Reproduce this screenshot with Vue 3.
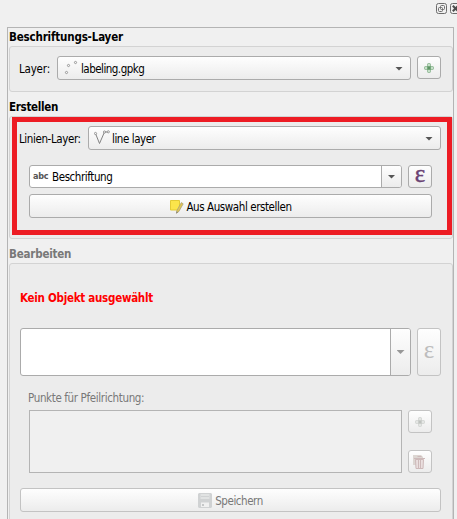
<script setup>
</script>

<template>
  <main class="dock">
    <header class="titlebar">
      <svg class="win" width="11" height="11" viewBox="0 0 11 11"><rect x=".5" y=".5" width="10" height="10" rx="2" /><rect x="4.5" y="2.5" width="4" height="4" rx="1" /><rect x="2.5" y="4.5" width="4" height="4" rx="1" /></svg>
      <svg class="win" width="11" height="11" viewBox="0 0 11 11"><rect x=".5" y=".5" width="10" height="10" rx="2" /><path class="cross" d="M2.8 2.8l5.4 5.4M8.2 2.8L2.8 8.2" /></svg>
    </header>

    <section class="panel">
      <h2 class="head first"><span class="t-layer">Beschriftungs-Layer</span></h2>
      <div class="group g1">
        <div class="row">
          <label class="lab l1">Layer:</label>
          <div class="control combo">
            <svg class="pts" width="16" height="16" viewBox="0 0 16 16"><circle cx="3.5" cy="12.5" r="1.1" /><circle cx="5.5" cy="5.5" r="1.1" /><circle cx="12.5" cy="2.5" r="1.1" /></svg>
            <span class="t-gpkg">labeling.gpkg</span>
            <i class="arrow"></i>
          </div>
          <button class="control tool">
            <svg class="plus" width="12" height="12" viewBox="0 0 12 12"><rect x="4.5" y="1.5" width="3" height="3" rx="1" /><rect x="4.5" y="7.5" width="3" height="3" rx="1" /><rect x="1.5" y="4.5" width="3" height="3" rx="1" /><rect x="7.5" y="4.5" width="3" height="3" rx="1" /><rect class="core" x="4.5" y="4.5" width="3" height="3" /></svg>
          </button>
        </div>
      </div>

      <h2 class="head"><span class="t-create">Erstellen</span></h2>
      <div class="group g2">
        <div class="mark"></div>
        <div class="row">
          <label class="lab l2"><span class="t-line">Linien-Layer:</span></label>
          <div class="control combo">
            <svg class="vline" width="16" height="16" viewBox="0 0 16 16"><path d="M1.5 3.500L5.500 13.500L10.500 2L14.500 2" /><circle cx="1.500" cy="3.500" r="1.100" /><circle cx="10.500" cy="2" r="1.100" /><circle cx="14.300" cy="1.800" r="1.100" /></svg>
            <span class="t-ll">line layer</span>
            <i class="arrow"></i>
          </div>
        </div>
        <div class="row field-row">
          <div class="control edit">
            <b class="abc">abc</b>
            <span class="t-besch">Beschriftung</span>
            <span class="drop"><i class="arrow"></i></span>
          </div>
          <button class="control tool eps">ε</button>
        </div>
        <button class="control wide make">
          <svg width="16" height="16" viewBox="0 0 16 16"><path d="M1.500 1.500h9v8l-1.500 1.500h-7.500z" fill="#fbe54b" stroke="#e3cb35" /><path d="M12.300 3.600l1.900 1.200-4.300 7.600-2.400 1.900.5-3z" fill="#e3c750" stroke="#a9a17f" stroke-width=".8" /><path d="M7.600 12.300l1.200.9-1.500 1.300z" fill="#777" /></svg>
          <span class="t-make">Aus Auswahl erstellen</span>
        </button>
      </div>

      <h2 class="head off"><span class="t-edit">Bearbeiten</span></h2>
      <div class="group g3">
        <p class="warn"><span class="t-warn">Kein Objekt ausgewählt</span></p>
        <div class="row">
          <div class="control edit tall"><span class="drop"><i class="arrow dim"></i></span></div>
          <button class="control tool eps tall dis">ε</button>
        </div>
        <p class="caption"><span class="t-cap">Punkte für Pfeilrichtung:</span></p>
        <div class="row list-row">
          <div class="list"></div>
          <div class="stack">
            <button class="control tool dis">
              <svg class="plus" width="12" height="12" viewBox="0 0 12 12"><rect x="4.5" y="1.5" width="3" height="3" rx="1" /><rect x="4.5" y="7.5" width="3" height="3" rx="1" /><rect x="1.5" y="4.5" width="3" height="3" rx="1" /><rect x="7.5" y="4.5" width="3" height="3" rx="1" /><rect class="core" x="4.5" y="4.5" width="3" height="3" /></svg>
            </button>
            <button class="control tool dis">
              <svg class="trash" width="14" height="16" viewBox="0 0 14 16"><path d="M1 1h8l2 2v8H1z" fill="#dcd6d2" /><path d="M3.500 5.500h8l-.5 9H4z" fill="#eadfdf" stroke="#cdb9b9" /><path d="M2 4.500h11M5.500 2.500h4M6.500 6v8M8.500 6v8" fill="none" stroke="#cdb9b9" /></svg>
            </button>
          </div>
        </div>
        <button class="control wide dis save">
          <svg width="14" height="15" viewBox="0 0 14 15"><path d="M1 0h12l1 1v13l-1 1H1l-1-1V1z" fill="#d0d2d3" /><path d="M2.500 1h9v5h-9z" fill="#e1e3e3" /><path d="M3 3.500h8" stroke="#d0d2d3" /><path d="M3 9.500h8V14H3z" fill="#f0f0f0" /><path d="M4 11h2v2H4z" fill="#c5c7c8" /></svg>
          <span class="t-save">Speichern</span>
        </button>
      </div>
    </section>
  </main>
</template>

<style>
body { overflow: hidden; background: #f0f0f0; }
</style>

<style scoped>
* { box-sizing: border-box; }
.dock { width: 457px; height: 519px; overflow: hidden; background: #f0f0f0; color: #000; font: 11.5px/14px "DejaVu Sans Condensed", "DejaVu Sans", sans-serif; font-stretch: condensed; }
span { white-space: nowrap; }
.t-layer { letter-spacing: -.18px; }
.t-gpkg { letter-spacing: -.52px; }
.t-create { letter-spacing: -.3px; }
.t-line { letter-spacing: -.4px; }
.t-ll { letter-spacing: -.45px; }
.t-besch { letter-spacing: -.42px; }
.t-make { letter-spacing: -.42px; }
.t-edit { letter-spacing: -.2px; }
.t-warn { letter-spacing: -.27px; }
.t-cap { letter-spacing: -.36px; }
.t-save { letter-spacing: -.45px; }
.titlebar { height: 27px; padding: 3px 0 0 436px; display: flex; gap: 3px; }
.win { flex: none; fill: none; stroke: #6c6c6c; }
.win .cross { stroke: #4c4c4c; stroke-width: 2; }
.panel { width: 447px; height: 520px; margin-left: 7px; padding-left: 1px; border: 1px solid #b4b4b4; }
.head { margin: 0; height: 24px; padding-top: 8px; font-size: 11.5px; line-height: 14px; font-weight: bold; }
.head.first { height: 18px; padding-top: 2px; }
.head.off { height: 25px; padding-top: 9px; color: #787878; }
.group { position: relative; width: 444px; border: 1px solid #d3d3d3; border-radius: 3px; background: #ececec; }
.g1 { height: 46px; padding: 9px 11px 0 9px; }
.g2 { height: 123px; margin-bottom: -1px; padding: 9px 11px 0 9px; }
.g3 { height: 270px; padding: 0 11px 0 10px; }
.mark { position: absolute; left: 2px; top: 0; width: 440px; height: 118px; border: 5px solid #ed1c24; pointer-events: none; }
.row { display: flex; gap: 6px; }
.lab { flex: none; line-height: 24px; padding-top: 1px; height: 24px; }
.l1 { width: 32px; letter-spacing: -.2px; }
.l2 { width: 63px; }
.control { font: inherit; color: inherit; border: 1px solid #ababab; border-radius: 3px; background: linear-gradient(#fefefe, #ececec); padding: 0; margin: 0; }
.combo { flex: 1; height: 24px; display: flex; align-items: center; padding: 2px 7px 0 5px; }
.combo svg { flex: none; margin: -2px 2px 0 0; }
.combo .arrow { margin-top: -1px; }
.pts, .vline { fill: #f8f8f8; stroke: #858585; stroke-width: .8; }
.vline path { fill: none; stroke: #828282; stroke-width: 1; }
.arrow { flex: none; width: 8px; height: 4px; margin-left: auto; background: #555; clip-path: polygon(0 0, 100% 0, 50% 100%); }
.arrow.dim { background: #989898; }
.tool { flex: none; width: 24px; height: 23px; display: flex; align-items: center; justify-content: center; }
.plus { fill: #c6dfc8; stroke: #8bb690; stroke-width: 1; }
.plus .core { fill: #5d9464; stroke: #76a77c; }
.field-row { margin: 15px 9px 0 10px; }
.edit { flex: 1; height: 23px; display: flex; align-items: center; background: #fff; padding-left: 3px; }
.edit .t-besch { padding-top: 1px; }
.abc { width: 16px; margin-right: 3px; font: bold 9px/12px "DejaVu Sans Condensed", "DejaVu Sans", sans-serif; font-stretch: condensed; letter-spacing: -.3px; color: #555; margin-top: -2px; }
.drop { display: flex; align-items: center; justify-content: center; width: 20px; height: 100%; margin-left: auto; border-left: 1px solid #ababab; background: linear-gradient(#fefefe, #ececec); border-radius: 0 2px 2px 0; }
.drop .arrow { margin: 0; }
.eps { font: 25px/20px "Liberation Serif", serif; color: #6a4273; -webkit-text-stroke: .4px #6a4273; padding-bottom: 5px; }
.wide { display: flex; height: 24px; align-items: center; justify-content: center; }
.make { width: 403px; margin: 6px 0 0 10px; gap: 1px; padding-top: 1px; }
.dis { border-color: #c3c3c3; color: #787878; }
.eps.dis { color: #bdbdbd; -webkit-text-stroke: 0; }
.dis .plus { fill: #e4e6e4; stroke: #d2d5d2; }
.dis .plus .core { fill: #bec2be; stroke: #cbcecb; }
.trash { margin-left: -2px; }
.warn { margin: 0; height: 64px; padding-top: 27px; font-weight: bold; color: #f00; }
.tall { height: 48px; }
.caption { margin: 0; height: 34px; padding: 15px 0 0 8px; color: #787878; }
.list-row { padding: 0 9px; }
.list { flex: 1; height: 63px; border: 1px solid #b4b4b4; background: #f0f0f0; }
.stack { display: flex; flex-direction: column; gap: 17px; }
.save { width: 421px; margin-top: 15px; gap: 3px; padding-top: 1px; }
</style>
